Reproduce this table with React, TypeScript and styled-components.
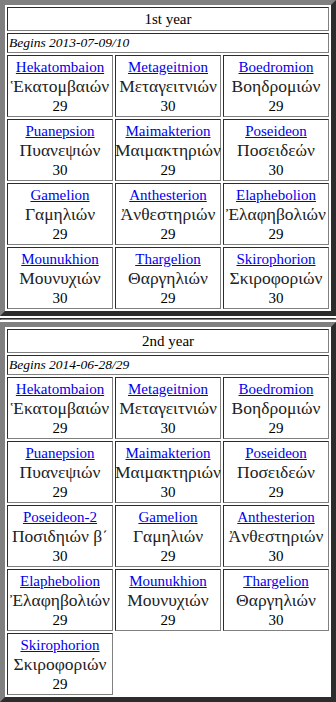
import styled, { createGlobalStyle } from 'styled-components';

type Month = { name: string; greek: string; days: number };
type Year = { title: string; begins: string; months: Month[] };

const years: Year[] = [
  {
    title: '1st year',
    begins: 'Begins 2013-07-09/10',
    months: [
      { name: 'Hekatombaion', greek: 'Ἑκατομβαιών', days: 29 },
      { name: 'Metageitnion', greek: 'Μεταγειτνιών', days: 30 },
      { name: 'Boedromion', greek: 'Βοηδρομιών', days: 29 },
      { name: 'Puanepsion', greek: 'Πυανεψιών', days: 30 },
      { name: 'Maimakterion', greek: 'Μαιμακτηριών', days: 29 },
      { name: 'Poseideon', greek: 'Ποσειδεών', days: 30 },
      { name: 'Gamelion', greek: 'Γαμηλιών', days: 29 },
      { name: 'Anthesterion', greek: 'Ἀνθεστηριών', days: 29 },
      { name: 'Elaphebolion', greek: 'Ἐλαφηβολιών', days: 29 },
      { name: 'Mounukhion', greek: 'Μουνυχιών', days: 30 },
      { name: 'Thargelion', greek: 'Θαργηλιών', days: 29 },
      { name: 'Skirophorion', greek: 'Σκιροφοριών', days: 30 },
    ],
  },
  {
    title: '2nd year',
    begins: 'Begins 2014-06-28/29',
    months: [
      { name: 'Hekatombaion', greek: 'Ἑκατομβαιών', days: 29 },
      { name: 'Metageitnion', greek: 'Μεταγειτνιών', days: 30 },
      { name: 'Boedromion', greek: 'Βοηδρομιών', days: 29 },
      { name: 'Puanepsion', greek: 'Πυανεψιών', days: 29 },
      { name: 'Maimakterion', greek: 'Μαιμακτηριών', days: 30 },
      { name: 'Poseideon', greek: 'Ποσειδεών', days: 29 },
      { name: 'Poseideon-2', greek: 'Ποσιδηιών β΄', days: 30 },
      { name: 'Gamelion', greek: 'Γαμηλιών', days: 29 },
      { name: 'Anthesterion', greek: 'Ἀνθεστηριών', days: 30 },
      { name: 'Elaphebolion', greek: 'Ἐλαφηβολιών', days: 29 },
      { name: 'Mounukhion', greek: 'Μουνυχιών', days: 29 },
      { name: 'Thargelion', greek: 'Θαργηλιών', days: 30 },
      { name: 'Skirophorion', greek: 'Σκιροφοριών', days: 29 },
    ],
  },
];

function App() {
  return (
    <>
      <GlobalStyle />
      {years.map((year, i) => (
        <div key={year.title}>
          {i > 0 && <Divider />}
          <YearTable>
            <Header>{year.title}</Header>
            <Begins>{year.begins}</Begins>
            {year.months.map((m) => (
              <MonthCell key={m.name}>
                <MonthLink href='#'>{m.name}</MonthLink>
                <Greek>{m.greek}</Greek>
                <Days>{m.days}</Days>
              </MonthCell>
            ))}
          </YearTable>
        </div>
      ))}
    </>
  );
}

const GlobalStyle = createGlobalStyle`
  body {
    margin: 0;
    background: #fff;
    color: #000;
    font-family: 'Liberation Serif', 'DejaVu Serif', serif;
    font-size: 15px;
  }
`;

const YearTable = styled.div`
  display: grid;
  grid-template-columns: repeat(3, 1fr);
  gap: 2px;
  padding: 2px;
  border: 5px outset gray;
  background: #fff;
`;

const Cell = styled.div`
  border: 1px inset gray;
  padding: 1px;
  min-width: 0;
`;

const Header = styled(Cell)`
  grid-column: 1 / -1;
  text-align: center;
  line-height: 20px;
`;

const Begins = styled(Cell)`
  grid-column: 1 / -1;
  font-style: italic;
  font-size: 13.5px;
  line-height: 16px;
`;

const MonthCell = styled(Cell)`
  height: 62px;
  box-sizing: border-box;
  display: flex;
  flex-direction: column;
  justify-content: center;
  align-items: center;
  text-align: center;
  white-space: nowrap;
`;

const MonthLink = styled.a`
  color: #0000ee;
  text-decoration: underline;
  line-height: 18px;
`;

const Greek = styled.span`
  font-size: 17.5px;
  line-height: 21px;
  color: #222;
`;

const Days = styled.span`
  line-height: 18px;
`;

const Divider = styled.div`
  margin: 2px 0;
  height: 0;
  border: 1px inset gray;
`;

export default App;
